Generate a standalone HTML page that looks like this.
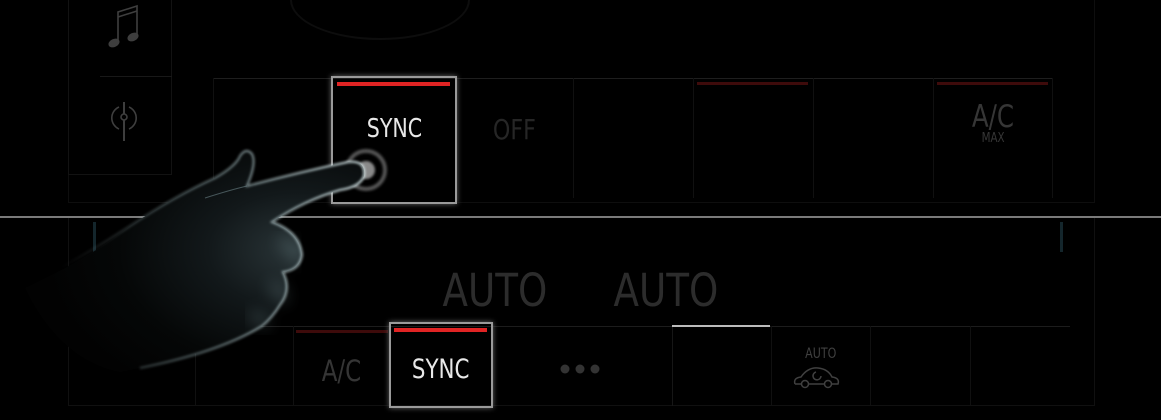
<!DOCTYPE html>
<html><head><style>
html,body{margin:0;padding:0;background:#000;width:1161px;height:420px;overflow:hidden}
body{position:relative;font-family:"Liberation Sans Narrow","DejaVu Sans Condensed","Liberation Sans",sans-serif}
.a{position:absolute;box-sizing:border-box}
.t{position:absolute;color:#3a3a3a;text-align:center}
.n{display:inline-block;transform:scaleX(0.88)}
</style></head><body>
<div class="a" style="left:68px;top:-5px;width:1027px;height:208px;border:1px solid #0e0e0e"></div>
<div class="a" style="left:68px;top:-5px;width:104px;height:180px;border:1px solid #121212"></div>
<div class="a" style="left:100px;top:76px;width:72px;height:1px;background:#181818"></div>
<svg class="a" style="left:95px;top:0" width="80" height="160" viewBox="95 0 80 160">
 <g fill="none" stroke="#3e3e3e" stroke-width="1.6">
  <path d="M118 42 V12 L137 6 V36"/><path d="M118 17 L137 11"/>
  <ellipse cx="114" cy="43" rx="5" ry="3.2" fill="#3e3e3e" transform="rotate(-25 114 43)"/><ellipse cx="133" cy="37" rx="5" ry="3.2" fill="#3e3e3e" transform="rotate(-25 133 37)"/>
  <circle cx="124" cy="117" r="3"/><path d="M124 102 V114 M124 120 V141" stroke-width="2"/><path d="M119 107 A12 12 0 0 0 119 129 M129 107 A12 12 0 0 1 129 129"/>
 </g>
</svg>
<div class="a" style="left:290px;top:-40px;width:180px;height:80px;border-radius:50%;border:2px solid #0d0d0d"></div>
<div class="a" style="left:213px;top:78px;width:840px;height:1px;background:#1e1e1e"></div>
<div class="a" style="left:573px;top:78px;width:1px;height:120px;background:#101010"></div>
<div class="a" style="left:693px;top:78px;width:1px;height:120px;background:#101010"></div>
<div class="a" style="left:813px;top:78px;width:1px;height:120px;background:#101010"></div>
<div class="a" style="left:933px;top:78px;width:1px;height:120px;background:#101010"></div>
<div class="a" style="left:1052px;top:78px;width:1px;height:120px;background:#101010"></div>
<div class="a" style="left:213px;top:78px;width:1px;height:124px;background:#101010"></div>
<div class="a" style="left:697px;top:82px;width:111px;height:3px;background:#3e0b0b"></div>
<div class="a" style="left:937px;top:82px;width:111px;height:3px;background:#3e0b0b"></div>
<div class="t" style="left:455px;top:113px;width:118px;font-size:28px;color:#262626"><span class="n">OFF</span></div>
<div class="t" style="left:933px;top:99px;width:120px;font-size:31px;color:#363636"><span class="n">A/C</span></div>
<div class="t" style="left:933px;top:131px;width:120px;font-size:13px;color:#363636"><span class="n">MAX</span></div>
<div class="a" style="left:331px;top:76px;width:126px;height:128px;border:2px solid #9a9a9a;box-shadow:0 0 5px #666"></div>
<div class="a" style="left:337px;top:82px;width:113px;height:4px;background:#e02424"></div>
<div class="t" style="left:331px;top:114px;width:126px;font-size:26px;color:#e8e8e8"><span class="n">SYNC</span></div>
<div class="a" style="left:0;top:216px;width:1161px;height:2px;background:#7a7a7a"></div>
<div class="a" style="left:68px;top:218px;width:1027px;height:188px;border:1px solid #101010;border-top:none"></div>
<div class="a" style="left:93px;top:222px;width:3px;height:30px;background:#14262c"></div>
<div class="a" style="left:1060px;top:222px;width:3px;height:30px;background:#14262c"></div>
<div class="t" style="left:430px;top:264px;width:130px;font-size:45px;color:#2c2c2c"><span class="n" style="transform:scaleX(0.92)">AUTO</span></div>
<div class="t" style="left:601px;top:264px;width:130px;font-size:45px;color:#2c2c2c"><span class="n" style="transform:scaleX(0.92)">AUTO</span></div>
<div class="a" style="left:95px;top:326px;width:975px;height:1px;background:#1c1c1c"></div>
<div class="a" style="left:195px;top:326px;width:1px;height:80px;background:#101010"></div>
<div class="a" style="left:293px;top:326px;width:1px;height:80px;background:#101010"></div>
<div class="a" style="left:672px;top:326px;width:1px;height:80px;background:#161616"></div>
<div class="a" style="left:771px;top:326px;width:1px;height:80px;background:#101010"></div>
<div class="a" style="left:870px;top:326px;width:1px;height:80px;background:#101010"></div>
<div class="a" style="left:970px;top:326px;width:1px;height:80px;background:#101010"></div>
<div class="a" style="left:296px;top:330px;width:92px;height:3px;background:#3e0b0b"></div>
<div class="a" style="left:672px;top:325px;width:98px;height:2px;background:#bbb"></div>
<div class="t" style="left:293px;top:354px;width:97px;font-size:29px;color:#353535"><span class="n">A/C</span></div>
<svg class="a" style="left:555px;top:362px" width="50" height="14"><g fill="#333"><circle cx="10" cy="7" r="4.5"/><circle cx="25" cy="7" r="4.5"/><circle cx="40" cy="7" r="4.5"/></g></svg>
<div class="t" style="left:771px;top:346px;width:99px;font-size:14px;color:#404040"><span class="n">AUTO</span></div>
<svg class="a" style="left:790px;top:364px" width="60" height="26" viewBox="0 0 60 26"><g fill="none" stroke="#404040" stroke-width="1.5"><path d="M5 20 Q3 14 11 13 Q18 3 28 4 Q38 5 42 13 Q50 14 48 20 H42 M34 20 H19 M11 20 H5"/><circle cx="15" cy="20" r="3.5"/><circle cx="38" cy="20" r="3.5"/><path d="M26 8 A4 4 0 1 0 31 12"/></g></svg>
<div class="a" style="left:389px;top:322px;width:104px;height:86px;border:2px solid #9a9a9a;box-shadow:0 0 5px #666"></div>
<div class="a" style="left:394px;top:328px;width:93px;height:4px;background:#e02424"></div>
<div class="t" style="left:389px;top:354px;width:104px;font-size:27px;color:#e8e8e8"><span class="n">SYNC</span></div>
<svg class="a" style="left:0;top:0" width="1161" height="420" viewBox="0 0 1161 420">
 <defs>
  <radialGradient id="hg" cx="0.8" cy="0.45" r="0.75"><stop offset="0" stop-color="#2a3538"/><stop offset="0.35" stop-color="#12181a"/><stop offset="0.7" stop-color="#050707"/><stop offset="1" stop-color="#020202"/></radialGradient>
  <linearGradient id="eg" x1="0" y1="0" x2="1" y2="0"><stop offset="0" stop-color="#a8c4c8" stop-opacity="0"/><stop offset="0.45" stop-color="#a8c4c8" stop-opacity="0.5"/><stop offset="1" stop-color="#d6e6e8"/></linearGradient>
  <filter id="bl"><feGaussianBlur stdDeviation="1.2"/></filter>
  <filter id="bl2"><feGaussianBlur stdDeviation="8"/></filter>
 </defs>
 <circle cx="366" cy="170" r="19" fill="none" stroke="#555" stroke-width="4" filter="url(#bl)"/>
 <circle cx="366" cy="170" r="9" fill="#8a8a8a" filter="url(#bl)"/>
 <path d="M25 288 Q90 258 130 226 Q175 196 215 178 Q236 166 240 156 Q246 147 252 154 Q257 163 247 186 Q300 172 348 162 Q366 160 364 176 Q360 187 340 190 Q305 200 272 222 Q300 232 302 255 Q300 270 283 272 Q292 290 280 305 Q272 318 262 326 Q220 352 120 372 Q60 360 25 288 Z" fill="url(#hg)"/>
 <path d="M280 240 Q300 250 296 262 M270 285 Q288 292 280 302 M250 315 Q270 320 262 326" fill="none" stroke="#7d979b" stroke-width="8" opacity="0.4" filter="url(#bl2)"/>
 <path d="M60 268 Q90 252 130 226 Q175 196 215 178 Q236 166 240 156 Q246 147 252 154 Q257 163 247 186 Q300 172 348 162 Q366 160 364 176 Q360 187 340 190 Q305 200 272 222 Q300 232 302 255 Q300 270 283 272 Q292 290 280 305 Q272 318 262 326 Q220 352 140 368" fill="none" stroke="url(#eg)" stroke-width="2" filter="url(#bl)"/>
 <path d="M247 186 Q230 190 205 198" fill="none" stroke="#6d8488" stroke-width="1" opacity="0.6"/>
</svg>
</body></html>
